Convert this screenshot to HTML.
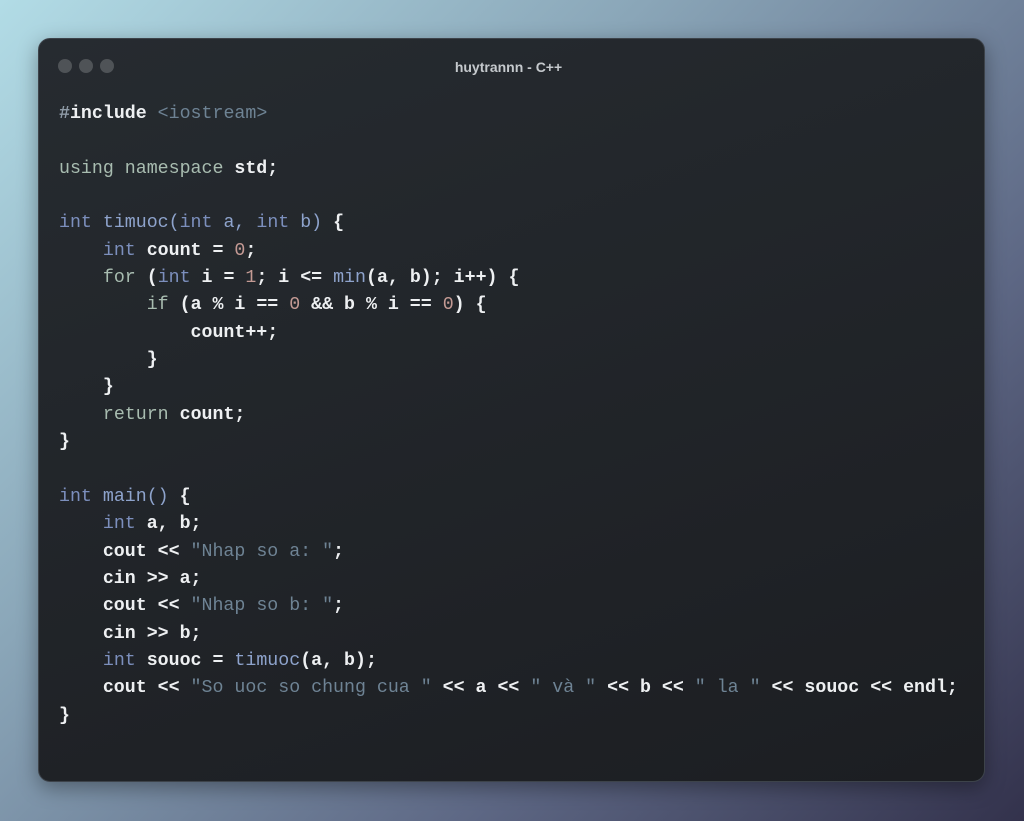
<!DOCTYPE html><html><head><style>
html,body{margin:0;width:1024px;height:821px;overflow:hidden;background:linear-gradient(135deg,#b2dce6 0%,#8aa6b8 35%,#5d6784 70%,#33324c 100%);}
.win{position:absolute;left:38px;top:38px;width:947px;height:744px;border-radius:12px;background:linear-gradient(160deg,#262b30,#1c1e22);box-shadow:0 6px 20px rgba(0,0,0,.35);border:1px solid #3d434a;box-sizing:border-box}
.dot{position:absolute;top:20px;width:14px;height:14px;border-radius:50%;background:#4f5357}
.title{position:absolute;top:20px;left:-6px;right:0;text-align:center;font:600 14px "Liberation Sans",sans-serif;color:#c5c9cd}
pre{position:absolute;left:20px;top:62px;margin:0;font:bold 18.27px/27.35px "Liberation Mono","DejaVu Sans Mono",monospace;color:#eef0f2}
.k{color:#7c8fbd;font-weight:normal}.f{color:#8ea3cc;font-weight:normal}.u{color:#a8bcb0;font-weight:normal}.s{color:#6e8394;font-weight:normal}.n{color:#c49a94;font-weight:normal}.p{color:#8e9aa6}
</style></head><body><div class="win">
<div class="dot" style="left:19px"></div><div class="dot" style="left:40px"></div><div class="dot" style="left:61px"></div>
<div class="title">huytrannn - C++</div>
<pre><span class="p">#</span>include <span class="s">&lt;iostream&gt;</span>

<span class="u">using namespace</span> std;

<span class="k">int</span> <span class="f">timuoc(</span><span class="k">int</span> <span class="f">a,</span> <span class="k">int</span> <span class="f">b)</span> {
    <span class="k">int</span> count = <span class="n">0</span>;
    <span class="u">for</span> (<span class="k">int</span> i = <span class="n">1</span>; i &lt;= <span class="f">min</span>(a, b); i++) {
        <span class="u">if</span> (a % i == <span class="n">0</span> &amp;&amp; b % i == <span class="n">0</span>) {
            count++;
        }
    }
    <span class="u">return</span> count;
}

<span class="k">int</span> <span class="f">main()</span> {
    <span class="k">int</span> a, b;
    cout &lt;&lt; <span class="s">"Nhap so a: "</span>;
    cin &gt;&gt; a;
    cout &lt;&lt; <span class="s">"Nhap so b: "</span>;
    cin &gt;&gt; b;
    <span class="k">int</span> souoc = <span class="f">timuoc</span>(a, b);
    cout &lt;&lt; <span class="s">"So uoc so chung cua "</span> &lt;&lt; a &lt;&lt; <span class="s">" và "</span> &lt;&lt; b &lt;&lt; <span class="s">" la "</span> &lt;&lt; souoc &lt;&lt; endl;
}</pre>
</div></body></html>
